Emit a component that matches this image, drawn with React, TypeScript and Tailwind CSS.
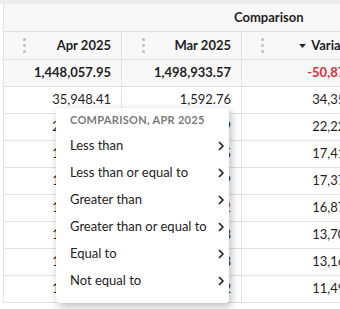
type Row = { apr: string; mar: string; varc: string; marRed?: boolean };

const rows: Row[] = [
  { apr: '35,948.41', mar: '1,592.76', varc: '34,355.65' },
  { apr: '23,811.20', mar: '1,587.19', varc: '22,224.01' },
  { apr: '18,996.40', mar: '1,580.15', varc: '17,416.25' },
  { apr: '18,944.08', mar: '1,569.79', varc: '17,374.29' },
  { apr: '16,500.30', mar: '-372.12', varc: '16,872.42', marRed: true },
  { apr: '15,243.91', mar: '1,539.58', varc: '13,704.33' },
  { apr: '14,690.75', mar: '1,527.38', varc: '13,163.37' },
  { apr: '12,985.03', mar: '1,491.82', varc: '11,493.21' },
];

const ops = [
  'Less than',
  'Less than or equal to',
  'Greater than',
  'Greater than or equal to',
  'Equal to',
  'Not equal to',
];

function Dots() {
  return (
    <div className="flex flex-col gap-[3px]">
      <span className="w-[3px] h-[3px] rounded-full bg-[#bdbdbd]" />
      <span className="w-[3px] h-[3px] rounded-full bg-[#bdbdbd]" />
      <span className="w-[3px] h-[3px] rounded-full bg-[#bdbdbd]" />
    </div>
  );
}

function Chevron() {
  return (
    <svg width="7" height="10" viewBox="0 0 7 10" className="text-[#222]">
      <polyline points="1.5,1.5 5,5 1.5,8.5" fill="none" stroke="currentColor" strokeWidth="1.7" strokeLinecap="round" strokeLinejoin="round" />
    </svg>
  );
}

export default function App() {
  return (
    <div className="relative w-[340px] h-[309px] overflow-hidden bg-white font-['Lato',sans-serif] text-[13px] text-[#1f1f1f]">
      <div className="h-[4px] bg-[#ededed]" />
      <div className="ml-[3px] border-l border-[#e2e2e2] w-[600px]">
        {/* group header */}
        <div className="flex h-[28px] bg-[#f8f8f8] border-b border-[#e2e2e2]">
          <div className="w-[118px]" />
          <div className="flex items-center pl-[112px] font-bold">Comparison</div>
        </div>
        {/* column header */}
        <div className="flex h-[28px] bg-[#f8f8f8] border-b border-[#e2e2e2] font-bold">
          <div className="w-[118px] flex items-center justify-between pl-[19px] pr-[10px] border-r border-[#e2e2e2]">
            <Dots />
            <span>Apr 2025</span>
          </div>
          <div className="w-[120px] flex items-center justify-between pl-[20px] pr-[10px] border-r border-[#e2e2e2]">
            <Dots />
            <span>Mar 2025</span>
          </div>
          <div className="w-[140px] flex items-center pl-[19px] pr-[21px]">
            <Dots />
            <div className="ml-auto flex items-center gap-[5px]">
              <svg width="7" height="4" viewBox="0 0 7 4">
                <polygon points="0,0 7,0 3.5,4" fill="#2a2a2a" />
              </svg>
              <span>Variance</span>
            </div>
          </div>
        </div>
        {/* total */}
        <div className="flex h-[27px] bg-[#f8f8f8] border-b border-[#e2e2e2] font-bold">
          <div className="w-[118px] flex items-center justify-end pr-[10px] border-r border-[#e2e2e2]">1,448,057.95</div>
          <div className="w-[120px] flex items-center justify-end pr-[10px] border-r border-[#e2e2e2]">1,498,933.57</div>
          <div className="w-[140px] flex items-center justify-end pr-[11px] text-[#dd2c38]">-50,875.62</div>
        </div>
        {rows.map((r, i) => (
          <div key={i} className="flex h-[27px] border-b border-[#e2e2e2]">
            <div className="w-[118px] flex items-center justify-end pr-[10px] border-r border-[#e2e2e2]">{r.apr}</div>
            <div className={`w-[120px] flex items-center justify-end pr-[10px] border-r border-[#e2e2e2] ${r.marRed ? 'text-[#dd2c38]' : ''}`}>{r.mar}</div>
            <div className="w-[140px] flex items-center justify-end pr-[11px]">{r.varc}</div>
          </div>
        ))}
      </div>

      {/* context menu */}
      <div className="absolute left-[56px] top-[108px] w-[173px] bg-white rounded-[4px] pb-[9px] shadow-[2px_3px_8px_rgba(0,0,0,0.28)]">
        <div className="h-[24px] flex items-center pl-[14px] text-[11px] font-bold tracking-[0.3px] text-[#7a7a7a]">
          COMPARISON, APR 2025
        </div>
        {ops.map((o) => (
          <div key={o} className="h-[27px] flex items-center justify-between pl-[14px] pr-[4px] text-[#222]">
            <span>{o}</span>
            <Chevron />
          </div>
        ))}
      </div>
    </div>
  );
}
